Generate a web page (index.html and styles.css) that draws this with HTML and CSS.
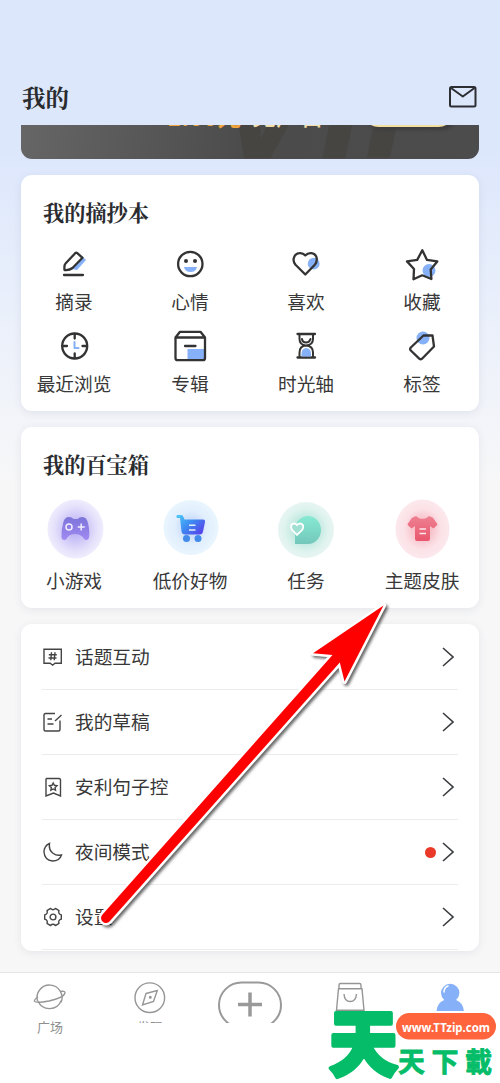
FILE: index.html
```html
<!DOCTYPE html>
<html lang="zh-CN">
<head>
<meta charset="utf-8">
<title>我的</title>
<link rel="stylesheet" href="styles.css">
</head>
<body>
<div class="screen">
  <header class="header">
    <h1 class="header-title">我的</h1>
    <svg class="mail" width="30" height="24" viewBox="0 0 30 24"><rect x="2" y="2" width="25.5" height="19.5" rx="1.5"/><path d="M3 3l11.8 8.5L26.500 3"/></svg>
  </header>
  <main class="content">
    <section class="vip">
      <span class="vip-mark">VIP</span>
      <span class="vip-price">1.00元</span>
      <span class="vip-text">免广告</span>
      <span class="vip-button"></span>
    </section>

    <section class="card notes">
      <h2 class="card-title">我的摘抄本</h2>
      <div class="grid">
        <div class="cell"><svg class="icon" viewBox="0 0 34 34"><path class="blue" d="M25 9l4 4-9 10-5-1z"/><path class="white" d="M20.500 6l5 5-11 11.500H7.500v-6z"/><path d="M20 5.800l5.500 5L15.500 21q-3 2.500-8 2-.5-5 1-6.500L17.500 7q1.500-2 2.500-1.200zM7 28h19"/></svg><span>摘录</span></div>
        <div class="cell"><svg class="icon" viewBox="0 0 34 34"><circle cx="17.300" cy="17" r="12.200"/><path class="blue" d="M11 20h13q-1 5-6.500 5T11 20z"/><g class="dark"><circle cx="13" cy="14" r="2"/><circle cx="22" cy="14" r="2"/></g></svg><span>心情</span></div>
        <div class="cell"><svg class="icon" viewBox="0 0 34 34"><circle class="blue" cx="24.700" cy="16.700" r="5.900"/><path d="M16.300 27.500L6.500 17.800Q4 14.500 4.700 11.500 6 6.500 10.500 6.200q3.200-.4 5.800 2.200 2.600-2.600 6-2.200 5 .8 5.500 5.500.2 3.500-2 6z"/></svg><span>喜欢</span></div>
        <div class="cell"><svg class="icon" viewBox="0 0 34 34"><circle class="blue" cx="24" cy="23.500" r="6.500"/><path d="M17.300 3.200l4.700 9.700 10.300 1.500-6.600 8.100.7 9.500-9.200-3.700-8.700 4 .5-10.300-7-7.600 10.200-1.500z"/></svg><span>收藏</span></div>
        <div class="cell"><svg class="icon" viewBox="0 0 34 34"><circle cx="17.700" cy="17" r="12.500"/><path d="M17.700 5v4.500M17.700 24.500V29M5.500 17H10M25.500 17H30"/><path class="blue-line" d="M17.500 13v6h4"/></svg><span>最近浏览</span></div>
        <div class="cell"><svg class="icon" viewBox="0 0 34 34"><path class="blue" d="M14.500 20H32v11H14.500z"/><path d="M2.500 8.500V29q0 2.200 2 2.200h25.500q2 0 2-2.200V8.500zM2.500 8.500L7 2.800h20.500L32 8.500M12 17h10.500"/></svg><span>专辑</span></div>
        <div class="cell"><svg class="icon" viewBox="0 0 34 34"><path d="M8.500 5H26M8.500 28.500H26"/><path class="thin" d="M10.500 5v5q0 6 6.500 6.500 7-.5 7-6.500V5M10.500 28v-4.500q0-6.500 6.500-7 7 .5 7 7V28M13 10q.5 3.500 4 3.500t4.500-3.500"/><path class="blue" d="M12.500 27.500V24q.5-4.500 4.700-5 4.300.5 4.800 5v3.500z"/></svg><span>时光轴</span></div>
        <div class="cell"><svg class="icon" viewBox="0 0 34 34"><circle class="blue" cx="18" cy="9" r="6.500"/><path d="M18.500 6.500H27.500L29 17.500 17 29.800q-1.500 1-2.500 0L5.800 21.500q-1.300-1.500 0-3z"/></svg><span>标签</span></div>
      </div>
    </section>

    <section class="card box">
      <h2 class="card-title">我的百宝箱</h2>
      <div class="grid">
        <div class="cell"><svg class="badge" viewBox="0 0 60 60">
          <defs>
            <radialGradient id="g1"><stop offset=".2" stop-color="#bfb6f5"/><stop offset=".75" stop-color="#e4e0fb"/><stop offset="1" stop-color="#efedfd"/></radialGradient>
            <linearGradient id="l1" x2="0" y2="1"><stop stop-color="#7c74d9"/><stop offset="1" stop-color="#a18bf2"/></linearGradient>
            <radialGradient id="g2"><stop offset=".1" stop-color="#c0d2fb"/><stop offset=".6" stop-color="#e0eefd"/><stop offset="1" stop-color="#eaf6fe"/></radialGradient>
            <linearGradient id="l2" x2="1" y2=".7"><stop stop-color="#50cdf7"/><stop offset=".5" stop-color="#3d8df2"/><stop offset="1" stop-color="#5547ea"/></linearGradient>
            <radialGradient id="g3"><stop offset=".3" stop-color="#b4e5da"/><stop offset=".8" stop-color="#e0f3ef"/><stop offset="1" stop-color="#e7f5f3"/></radialGradient>
            <linearGradient id="l3" x2="0" y2="1"><stop stop-color="#86ead3"/><stop offset="1" stop-color="#73c7ba"/></linearGradient>
            <radialGradient id="g4"><stop offset=".2" stop-color="#f7b7c2"/><stop offset=".7" stop-color="#fbe2e7"/><stop offset="1" stop-color="#fce9ed"/></radialGradient>
            <linearGradient id="l4" x2="0" y2="1"><stop stop-color="#ee8192"/><stop offset="1" stop-color="#e9566d"/></linearGradient>
          </defs>
          <ellipse cx="31.500" cy="30" rx="28" ry="29.500" fill="url(#g1)"/><path fill="url(#l1)" d="M25 18q3 0 4.500 2h4q2-2 5-2 4 0 5.500 6 2 9 1 14.500-.5 2.500-3 2.500-1.500 0-3-2.500-2.500-3.500-8-3.500t-7.500 3.500Q22 41 20.500 41q-2.500 0-3-2.500-.5-7 1.800-15Q20.500 18 25 18z"/><circle cx="25" cy="28" r="3" fill="none" stroke="#f1edff" stroke-width="1.500"/><path d="M37.200 24.500v7M33.700 28h7" stroke="#f1edff" stroke-width="1.500"/>
        </svg><span>小游戏</span></div>
        <div class="cell"><svg class="badge" viewBox="0 0 60 60"><circle cx="31" cy="28.500" r="27.500" fill="url(#g2)"/><path fill="url(#l2)" d="M17 16h4q2 0 2.500 2l1 2.500H43q2.500 0 2 2.500l-2 9.500q-.5 3-3 3H25q-3 0-3.500-3L20 19h-3q-1.500-1.500 0-3z"/><g fill="#438bea"><circle cx="26.500" cy="39.500" r="3.500"/><circle cx="38" cy="39.500" r="3.500"/></g><path d="M29 26.300h6.500M29 31h6.500" stroke="#e4efff" stroke-width="1.600"/></svg><span>低价好物</span></div>
        <div class="cell"><svg class="badge" viewBox="0 0 60 60"><circle cx="30" cy="31" r="28" fill="url(#g3)"/><path fill="url(#l3)" d="M19 45V30a13 14 0 1 1 13 15z"/><path d="M21 36l-5-5.200q-2.200-4 .7-6 2.500-1 4.300 1.200 2-2.200 4.500-1.200 3 2 .8 6z" fill="#a1dfd3" stroke="#fff" stroke-width="1.800"/></svg><span>任务</span></div>
        <div class="cell"><svg class="badge" viewBox="0 0 60 60"><ellipse cx="30.500" cy="30" rx="27" ry="29.500" fill="url(#g4)"/><path fill="url(#l4)" d="M24 17l3 2.200q3.500 1.300 7 0L37 17l4 1.700 4.200 6q.4.800-.3 1.500L41.500 29.500l-3.500-2.500v13q0 2-2 2H25q-2 0-2-2V27l-3.500 2.500-3.500-3.300q-.7-.7-.2-1.500l4.200-6z"/><path d="M27.500 30h6.500M27.500 34.500h6.500" stroke="#ffe7ec" stroke-width="1.600"/></svg><span>主题皮肤</span></div>
      </div>
    </section>

    <section class="card list">
      <div class="row"><svg class="row-icon" viewBox="0 0 20 20"><path d="M1 2.200h17.300v14H12l-2.400 2-2.400-2H1zM8.500 5.300l-.7 8M12 5.300l-.8 8M5.800 7.700h8M5.500 11h8"/></svg><span class="row-text">话题互动</span><svg class="chevron" viewBox="0 0 12 20"><path d="M1 1l10 9L1 19"/></svg></div>
      <div class="row"><svg class="row-icon" viewBox="0 0 20 20"><path d="M12 1.500H2.500q-1.500 0-1.500 1.500v14.500q0 1.500 1.500 1.500h13q1.500 0 1.500-1.500V8.500M18.500 3l-6.500 6M4.500 7h4.500M4.500 12h6"/></svg><span class="row-text">我的草稿</span><svg class="chevron" viewBox="0 0 12 20"><path d="M1 1l10 9L1 19"/></svg></div>
      <div class="row"><svg class="row-icon" viewBox="0 0 20 20"><path d="M3.500 1.500H16q1.500 0 1.500 1.500v16l-7-3-7.500 3V3q0-1.500.5-1.500zM10.200 6l1.200 2.300 2.600.4-1.900 1.900.4 2.600-2.300-1.200L7.900 13.200l.4-2.600-1.900-1.900L9 8.300z"/></svg><span class="row-text">安利句子控</span><svg class="chevron" viewBox="0 0 12 20"><path d="M1 1l10 9L1 19"/></svg></div>
      <div class="row"><svg class="row-icon" viewBox="0 0 20 20"><path d="M6.500 1.500Q1 4 1 10q.5 8 8.500 9 7 0 9-6-5 1-8.500-1.800Q5.500 8 6.500 1.500z"/></svg><span class="row-text">夜间模式</span><i class="dot"></i><svg class="chevron" viewBox="0 0 12 20"><path d="M1 1l10 9L1 19"/></svg></div>
      <div class="row"><svg class="row-icon" viewBox="0 0 20 20"><path class="gear" d="M18.300 7.850V12.150Q14.800 13.200 16 16.400L12.450 18.550Q10 16 7.550 18.550L4 16.400Q5.200 13.200 1.700 12.150V7.850Q5.200 6.800 4 3.600L7.550 1.450Q10 4 12.450 1.450L16 3.600Q14.800 6.800 18.300 7.850z"/><circle cx="10" cy="10" r="2.900"/></svg><span class="row-text">设置</span><svg class="chevron" viewBox="0 0 12 20"><path d="M1 1l10 9L1 19"/></svg></div>
    </section>
  </main>

  <nav class="nav">
    <div class="tab tab-first"><svg class="tab-icon" viewBox="0 0 36 36"><path d="M5.500 20A12.500 12.500 0 1 1 29 21.500M6 20a12.500 12.500 0 0 0 23.200-.5"/><path d="M6 16q-4 2.500-3.500 4.300 1.500 2 14.500-.3Q32 16.500 33 12q0-2.500-5-1.500"/></svg><span>广场</span></div>
    <div class="tab"><svg class="tab-icon" viewBox="0 0 36 36"><circle cx="17.800" cy="16.700" r="14.800"/><path d="M14 12.500L25.300 9.500 21.500 20.500 10.500 24z"/><circle cx="18.300" cy="16.300" r=".8"/></svg><span>发现</span></div>
    <div class="tab"><svg class="plus" viewBox="0 0 66 48"><rect x="2" y="1.500" width="62" height="45" rx="22.500"/><path d="M33 11.500v24M21 23.500h24"/></svg></div>
    <div class="tab"><svg class="tab-icon" viewBox="0 0 36 36"><path d="M6.500 7.800l-2 21.500h27.500l-2-21.500zM7 7.500V4q0-1.500 1.500-1.500h19Q29 2.500 29 4v3.500M12 13q.5 7.500 6.200 7.500T24.500 13"/></svg><span>购物</span></div>
    <div class="tab"><svg class="tab-icon person" viewBox="0 0 36 36"><path d="M12.300 19a9.200 9.200 0 1 1 11.800 0q7 2.500 7.800 11H4.500q.5-8 7.800-11z"/><path class="shine" d="M12 11q0-4.500 4-6"/></svg></div>
  </nav>

  <svg class="arrow" width="500" height="1083" viewBox="0 0 500 1083"><path d="M383.500 605.500L313 653.200l19.500 1.800L102.300 914.700a4.800 4.800 0 0 0 7.400 6.600L339.800 662.500l4.700 19z"/></svg>

  <svg class="watermark" width="180" height="80" viewBox="0 0 180 80">
    <text class="wm-big" x="9" y="67" textLength="69" lengthAdjust="spacingAndGlyphs">天</text>
    <rect x="76" y="10" width="100" height="26.500" rx="13.250"/>
    <text class="wm-url" x="82" y="28.500" textLength="88" lengthAdjust="spacingAndGlyphs">www.TTzip.com</text>
    <text class="wm-small" x="78" y="68.500" textLength="94">天下載</text>
  </svg>
</div>
</body>
</html>
```
FILE: styles.css
```css
* { box-sizing: border-box; }

body {
  margin: 0;
  font-family: "Liberation Sans", "Noto Sans CJK SC", sans-serif;
  color: #383838;
}

.screen {
  position: relative;
  display: flex;
  flex-direction: column;
  width: 500px;
  height: 1083px;
  overflow: hidden;
  background: linear-gradient(#dce7fb 0, #dde7fc 150px, #e9effb 300px, #f7f7f8 480px, #f7f7f7 100%);
}

.header {
  flex: none;
  display: flex;
  justify-content: space-between;
  align-items: center;
  height: 125px;
  padding: 68px 22px 0;
}

.header-title, .card-title {
  margin: 0;
  font-family: "Noto Serif CJK SC", "Noto Serif SC", "Source Han Serif SC", "Noto Sans CJK SC", serif;
  font-weight: 700;
  color: #292b2f;
}

.header-title { font-size: 23.500px; line-height: 30px; }

.mail { fill: none; stroke: #2c2e32; stroke-width: 2; stroke-linejoin: round; }

.content {
  flex: none;
  display: flex;
  flex-direction: column;
  height: 847px;
  padding: 0 21px;
}

.vip {
  position: relative;
  height: 33.500px;
  margin-bottom: 16.500px;
  overflow: hidden;
  border-radius: 0 0 11px 11px;
  background: linear-gradient(100deg, #666 0, #4b4b4b 50%, #4c4c4c 100%);
}

.vip span { position: absolute; white-space: nowrap; }

.vip-mark {
  left: 192px;
  top: -112px;
  font: italic 700 160px/180px "Liberation Sans", sans-serif;
  color: #464542;
}

.vip-price, .vip-text {
  top: -27px;
  font-family: "Noto Sans CJK SC", sans-serif;
  font-size: 24px;
  line-height: 35px;
  font-weight: 700;
}

.vip-price { left: 146px; color: #f1a33c; }
.vip-text { left: 231px; top: -28px; color: #f3dfa7; font-weight: 500; }

.vip-button {
  left: 342px;
  top: -29px;
  width: 91px;
  height: 31px;
  border-radius: 16px;
  background: #f5df9f;
  box-shadow: 3px 3px 3px #3e3e3e;
}

.card {
  flex: none;
  border-radius: 11px;
  background: #fff;
  box-shadow: 0 2px 9px rgba(60, 70, 100, .09);
}

.notes { height: 235.500px; padding-top: 22px; margin-bottom: 16.500px; }
.box { height: 181px; padding-top: 22px; margin-bottom: 16px; }

.card-title { padding-left: 22px; font-size: 21.200px; line-height: 30px; }

.grid {
  display: grid;
  grid-template-columns: repeat(4, 116px);
  row-gap: 14px;
  margin: 20px 0 0 -5px;
}

.cell {
  display: flex;
  flex-direction: column;
  align-items: center;
  gap: 10px;
  font-size: 18.700px;
  line-height: 24px;
}

.box .cell { gap: 11px; }

.icon { width: 34px; height: 34px; }
.icon path, .icon circle { fill: none; stroke: #333; stroke-width: 2.300; stroke-linecap: round; stroke-linejoin: round; }
.icon .blue { fill: #86b1f8; stroke: none; }
.icon .white { fill: #fff; stroke: none; }
.icon .blue-line { stroke: #86b1f8; stroke-width: 2; }
.icon .thin { stroke-width: 2; }
.icon .dark circle { fill: #333; stroke: none; }

.badge { width: 60px; height: 60px; }

.list { height: 326.500px; padding: .5px 21px 0; }

.row {
  display: flex;
  align-items: center;
  height: 65.200px;
  border-bottom: 1px solid #ececec;
  font-size: 18.700px;
  line-height: 28px;
}

.row-icon { width: 20px; height: 20px; margin: 0 12px 0 1px; fill: none; stroke: #444; stroke-width: 1.400; }
.row-text { flex: 1; padding-top: 2px; }
.row-icon .gear { stroke-linejoin: round; }

.dot { width: 11px; height: 11px; margin-right: 6px; border-radius: 50%; background: #ea3829; }

.chevron { width: 12px; height: 20px; margin-right: 4px; fill: none; stroke: #3b3d40; stroke-width: 1.600; }

.nav {
  flex: none;
  display: grid;
  grid-template-columns: repeat(5, 100px);
  height: 111px;
  border-top: 1.500px solid #e5e5e5;
  background: #fff;
}

.tab {
  display: flex;
  flex-direction: column;
  align-items: center;
  height: 50px;
  padding-top: 8px;
  overflow: hidden;
  font-size: 13px;
  line-height: 18px;
  color: #8f8f8f;
}

.tab-first { height: 70px; }

.tab-icon { flex: none; width: 36px; height: 36px; fill: none; stroke: #969696; stroke-width: 1.400; margin-bottom: 2px; }
.person { fill: #86b1f8; stroke: none; }
.person .shine { fill: none; stroke: #fff; stroke-width: 1.500; stroke-linecap: round; }

.plus { flex: none; width: 66px; height: 48px; fill: none; stroke: #999; stroke-width: 2; }
.plus path { stroke-width: 3.500; }

.arrow { position: absolute; left: 0; top: 0; filter: drop-shadow(2px 2px 1.500px rgba(0, 0, 0, .6)); }
.arrow path { fill: #fe0000; stroke: #fff; stroke-width: 5px; stroke-linejoin: round; paint-order: stroke; }

.watermark { position: absolute; left: 320px; top: 1003px; }
.watermark text { font-family: "Noto Sans CJK SC", sans-serif; font-weight: 900; }
.watermark rect { fill: #ff643d; }
.watermark .wm-big { font-size: 72px; fill: #05bd68; stroke: #05bd68; stroke-width: 4px; stroke-linejoin: round; }
.watermark .wm-url { font: 700 13px "Noto Sans", sans-serif; fill: #fff; }
.watermark .wm-small { font-size: 27px; font-weight: 700; fill: #05bd68; stroke: #05bd68; stroke-width: .8px; stroke-linejoin: round; }
```
